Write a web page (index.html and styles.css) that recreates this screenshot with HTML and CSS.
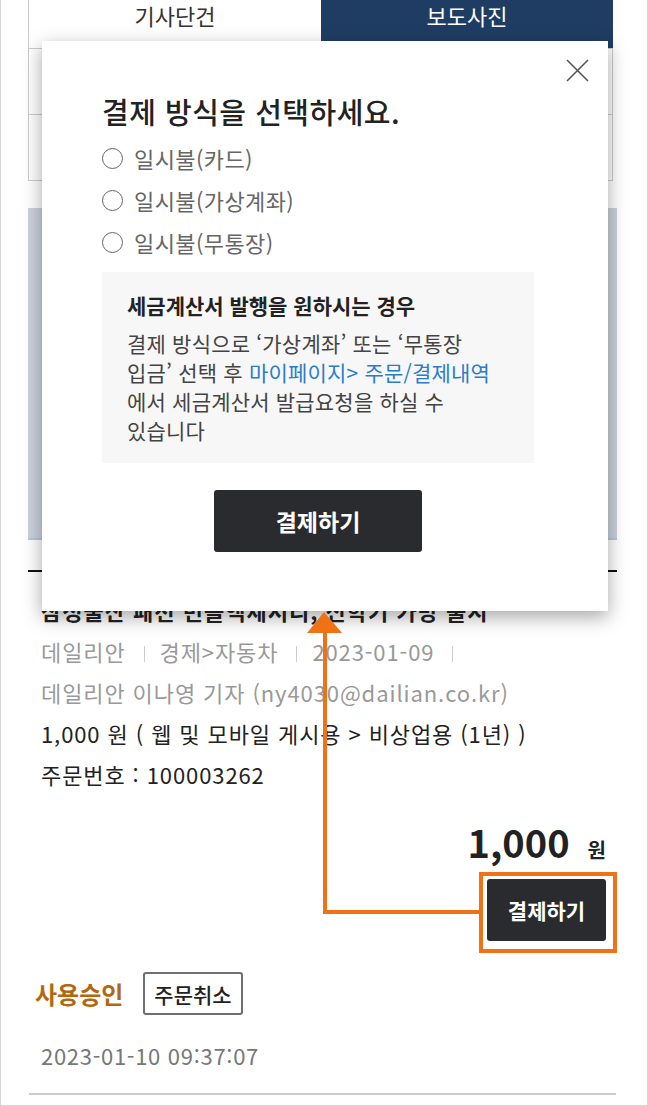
FILE: index.html
```html
<!DOCTYPE html>
<html lang="ko">

<head>
    <meta charset="UTF-8">
    <meta name="viewport" content="width=device-width, initial-scale=1.0">
    <link rel="stylesheet" href="styles.css">
</head>

<body>
    <div class="page">
        <div class="content">
            <div class="tabs">
                <div class="tab">기사단건</div>
                <div class="tab active">보도사진</div>
            </div>
            <div class="filter">
                <div class="filter-row"></div>
                <div class="filter-row"></div>
            </div>
            <div class="photo"></div>
            <div class="divider"></div>

            <div class="order">
                <div class="order-title">삼성물산 패션 빈폴액세서리, 신학기 가방 출시</div>
                <div class="order-meta">데일리안<span class="sep"></span>경제&gt;자동차<span class="sep"></span>2023-01-09<span class="sep"></span></div>
                <div class="order-meta">데일리안 이나영 기자 (ny4030@dailian.co.kr)</div>
                <div class="order-line">1,000 원 ( 웹 및 모바일 게시용 &gt; 비상업용 (1년) )</div>
                <div class="order-line">주문번호 : 100003262</div>
                <div class="order-total">1,000<span class="won">원</span></div>
                <div class="order-pay">
                    <button class="btn-dark btn-small">결제하기</button>
                </div>
                <div class="order-status">
                    <span class="status">사용승인</span>
                    <button class="btn-outline">주문취소</button>
                </div>
                <div class="order-date">2023-01-10 09:37:07</div>
            </div>
            <div class="bottom-line"></div>
        </div>

        <!-- payment popup -->
        <div class="modal">
            <button class="modal-close" aria-label="닫기">
                <svg width="23" height="23" viewBox="0 0 23 23">
                    <path d="M1 1 L22 22 M22 1 L1 22" stroke="#555" stroke-width="1.6" fill="none" />
                </svg>
            </button>
            <h2 class="modal-title">결제 방식을 선택하세요.</h2>
            <ul class="pay-options">
                <li><span class="radio"></span>일시불(카드)</li>
                <li><span class="radio"></span>일시불(가상계좌)</li>
                <li><span class="radio"></span>일시불(무통장)</li>
            </ul>
            <div class="notice">
                <div class="notice-title">세금계산서 발행을 원하시는 경우</div>
                <p class="notice-text">결제 방식으로 ‘가상계좌’ 또는 ‘무통장<br>입금’ 선택 후 <a href="#">마이페이지&gt; 주문/결제내역</a><br>에서 세금계산서 발급요청을 하실 수<br>있습니다</p>
            </div>
            <button class="btn-dark btn-large">결제하기</button>
        </div>

        <!-- guide arrow -->
        <svg class="guide" width="648" height="1106" viewBox="0 0 648 1106">
            <polyline points="324,628 324,912 478,912" fill="none" stroke="#ef7217" stroke-width="4" />
            <polygon points="323,612 306,633 341,633" fill="#ef7217" />
            <rect x="480" y="874" width="134" height="77" fill="none" stroke="#ef7217" stroke-width="4" />
        </svg>
    </div>
</body>

</html>
```

FILE: styles.css
```css
* {
    box-sizing: border-box;
}

body {
    margin: 0;
    padding: 0;
    font-family: "Noto Sans CJK KR", "Noto Sans", sans-serif;
    background-color: #fff;
    color: #222;
}

.page {
    position: relative;
    width: 648px;
    height: 1106px;
    border: 1px solid #d4d4d4;
    border-top: none;
    overflow: hidden;
}

.content {
    margin-left: 27px;
    width: 589px;
}

/* tabs */
.tabs {
    display: flex;
    height: 48px;
    margin-right: 4px;
}

.tab {
    flex: 1;
    font-size: 22px;
    line-height: 30px;
    text-align: center;
    color: #333;
    border-left: 1px solid #ccc;
}

.tab.active {
    background-color: #1f3d63;
    color: #fff;
    border-left: none;
}

.filter {
    margin-right: 4px;
    border-top: 1px solid #ccc;
    border-left: 1px solid #ccc;
    border-right: 1px solid #ccc;
}

.filter-row {
    height: 66px;
    border-bottom: 1px solid #ccc;
}

.photo {
    margin-top: 27px;
    height: 332px;
    background-color: #ccd3de;
    border-bottom: 2px solid #bfc6d1;
}

.divider {
    margin-top: 30px;
    height: 2px;
    background-color: #111;
}

/* order info */
.order {
    padding: 18px 11px 0 13px;
}

.order-title {
    font-size: 22px;
    font-weight: 700;
    line-height: 41px;
    letter-spacing: 1px;
    color: #222;
}

.order-meta,
.order-line {
    font-size: 22px;
    line-height: 41px;
    letter-spacing: 0.9px;
}

.order-meta {
    color: #999;
}

.sep {
    display: inline-block;
    width: 1px;
    height: 16px;
    margin: 0 15px 0 18px;
    background-color: #ccc;
    vertical-align: -1px;
}

.order-line {
    color: #222;
}

.order-total {
    margin-top: 22px;
    display: flex;
    justify-content: flex-end;
    align-items: baseline;
    height: 50px;
    font-size: 38px;
    font-weight: 700;
    line-height: 50px;
    color: #222;
}

.order-total .won {
    margin-left: 18px;
    font-size: 20px;
    line-height: 1;
}

.order-pay {
    margin-top: 12px;
    display: flex;
    justify-content: flex-end;
}

button {
    font-family: inherit;
    cursor: pointer;
}

.btn-dark {
    background-color: #2a2b2f;
    color: #fff;
    border: none;
    border-radius: 3px;
    font-weight: 700;
}

.btn-small {
    width: 119px;
    height: 62px;
    font-size: 21px;
}

.order-status {
    margin-top: 31px;
    margin-left: -6px;
    display: flex;
    align-items: center;
    gap: 20px;
}

.status {
    font-size: 24px;
    font-weight: 700;
    color: #b4670e;
}

.btn-outline {
    height: 43px;
    padding: 0 9px;
    background-color: #fff;
    border: 2px solid #6f6f6f;
    border-radius: 3px;
    font-size: 21px;
    font-weight: 500;
    color: #222;
}

.order-date {
    margin-top: 25px;
    font-size: 22px;
    line-height: 30px;
    letter-spacing: 0.7px;
    color: #777;
}

.bottom-line {
    margin-top: 23px;
    margin-left: 1px;
    margin-right: 1px;
    height: 2px;
    background-color: #ccc;
}

/* popup */
.modal {
    position: absolute;
    left: 41px;
    top: 41px;
    width: 566px;
    height: 570px;
    padding: 52px 74px 0 60px;
    background-color: #fff;
    box-shadow: 0 6px 18px rgba(0, 0, 0, 0.35);
}

.modal-close {
    position: absolute;
    top: 18px;
    right: 19px;
    width: 23px;
    height: 23px;
    padding: 0;
    border: none;
    background: none;
}

.modal-close svg {
    display: block;
}

.modal-title {
    margin: 0;
    font-size: 29px;
    font-weight: 500;
    line-height: 36px;
    letter-spacing: 0.5px;
    color: #222;
}

.pay-options {
    list-style: none;
    margin: 8px 0 0;
    padding: 0;
}

.pay-options li {
    display: flex;
    align-items: center;
    height: 42px;
    font-size: 22px;
    letter-spacing: 0.4px;
    color: #666;
}

.radio {
    width: 21px;
    height: 21px;
    margin-right: 11px;
    border: 1.5px solid #666;
    border-radius: 50%;
}

.notice {
    margin-top: 9px;
    padding: 19px 25px 18px;
    background-color: #f7f7f7;
}

.notice-title {
    font-size: 21px;
    font-weight: 700;
    line-height: 29px;
    color: #222;
}

.notice-text {
    margin: 9px 0 0;
    font-size: 21px;
    line-height: 29px;
    letter-spacing: 0.2px;
    color: #444;
}

.notice-text a {
    color: #2a7ccc;
    text-decoration: none;
}

.btn-large {
    display: block;
    margin: 27px auto 0;
    width: 208px;
    height: 62px;
    font-size: 23px;
}

.guide {
    position: absolute;
    left: 0;
    top: 0;
    pointer-events: none;
}
```
